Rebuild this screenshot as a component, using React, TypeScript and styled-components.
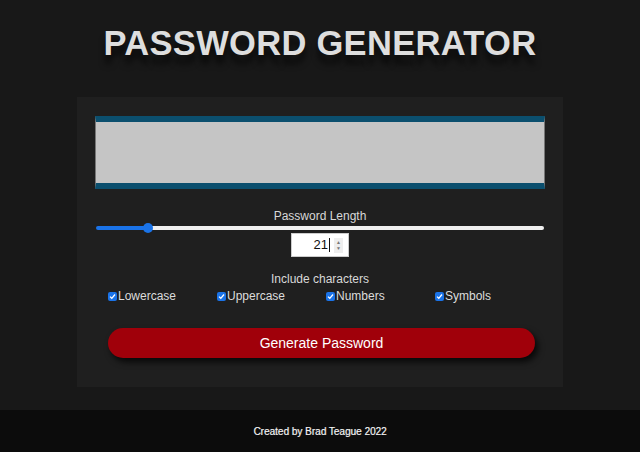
import React, { useState } from "react";
import styled, { createGlobalStyle } from "styled-components";

const Global = createGlobalStyle`
  html, body { margin: 0; padding: 0; background: #181818; }
  body { font-family: "Liberation Sans", Arial, Helvetica, sans-serif; color: #ddd; }
  * { box-sizing: border-box; }
`;

const Page = styled.div`
  min-height: 452px;
  display: flex;
  flex-direction: column;
  background: #181818;
`;

const Main = styled.main`
  flex: 1;
  display: flex;
  flex-direction: column;
  align-items: center;
`;

const Title = styled.h1`
  margin: 23px 0 0;
  font-size: 34.5px;
  line-height: 40px;
  font-weight: 700;
  color: #dedede;
  letter-spacing: 0.3px;
  text-shadow: 0 9px 6px rgba(0, 0, 0, 0.6);
`;

const Card = styled.section`
  margin-top: 34px;
  width: 486px;
  height: 290px;
  background: #1f1f1f;
  padding: 19px 18px 0;
  display: flex;
  flex-direction: column;
  align-items: center;
`;

const Output = styled.div`
  width: 450px;
  height: 73px;
  background: #c5c5c5;
  border-top: 6px solid #0b4f6e;
  border-bottom: 6px solid #0b4f6e;
  border-left: 1px solid #777;
  border-right: 1px solid #777;
`;

const Label = styled.div<{ $mt: number }>`
  margin-top: ${(p) => p.$mt}px;
  font-size: 12px;
  line-height: 14px;
  color: #d8d8d8;
`;

const Range = styled.input`
  -webkit-appearance: none;
  appearance: none;
  width: 448px;
  height: 4px;
  margin: 3px 0 0;
  border-radius: 2px;
  outline: none;
  &::-webkit-slider-thumb {
    -webkit-appearance: none;
    width: 10px;
    height: 10px;
    border-radius: 50%;
    background: #1a73e8;
    border: none;
  }
`;

const NumBox = styled.div`
  margin-top: 3px;
  width: 58px;
  height: 24px;
  background: #fff;
  border: 1px solid #ccc;
  display: flex;
  align-items: center;
  justify-content: flex-end;
  padding-right: 5px;
  gap: 4px;
`;

const NumText = styled.span`
  font-size: 13px;
  color: #111;
  border-right: 1px solid #111;
  padding-right: 1px;
  line-height: 14px;
`;

const Spinner = styled.div`
  width: 9px;
  height: 15px;
  background: #eee;
  display: flex;
  flex-direction: column;
  align-items: center;
  justify-content: center;
  font-size: 5px;
  color: #777;
  line-height: 6px;
`;

const Checks = styled.div`
  margin-top: 3px;
  width: 448px;
  display: grid;
  grid-template-columns: repeat(4, 1fr);
  padding-left: 12px;
`;

const CheckLabel = styled.label`
  display: flex;
  align-items: center;
  font-size: 12px;
  color: #dcdcdc;
  line-height: 14px;
`;

const Box = styled.span`
  width: 9px;
  height: 9px;
  border-radius: 2px;
  background: #1a73e8;
  display: inline-flex;
  align-items: center;
  justify-content: center;
  margin-right: 1px;
`;

const Button = styled.button`
  margin-top: 25px;
  margin-left: 3px;
  width: 427px;
  height: 30px;
  border: none;
  border-radius: 15px;
  background: #a0000a;
  color: #fff;
  font-family: "Liberation Sans", Arial, sans-serif;
  font-size: 14px;
  box-shadow: 3px 4px 6px rgba(0, 0, 0, 0.75);
`;

const Footer = styled.footer`
  height: 42px;
  background: #0c0c0c;
  display: flex;
  align-items: center;
  justify-content: center;
  font-size: 10px;
  color: #f0f0f0;
  text-shadow: 0.5px 0 0 rgba(255, 255, 255, 0.5);
`;

function Check({ label }: { label: string }) {
  return (
    <CheckLabel>
      <Box>
        <svg width="7" height="7" viewBox="0 0 7 7">
          <path d="M1 3.6 L2.8 5.3 L6 1.5" stroke="#fff" strokeWidth="1.3" fill="none" />
        </svg>
      </Box>
      {label}
    </CheckLabel>
  );
}

export default function App() {
  const [len, setLen] = useState(21);
  const pct = ((len - 8) / (128 - 8)) * 100;
  return (
    <Page>
      <Global />
      <Main>
        <Title>PASSWORD GENERATOR</Title>
        <Card>
          <Output />
          <Label $mt={20}>Password Length</Label>
          <Range
            type="range"
            min={8}
            max={128}
            value={len}
            onChange={(e) => setLen(Number(e.target.value))}
            style={{
              background: `linear-gradient(to right, #1a73e8 0%, #1a73e8 ${pct}%, #efefef ${pct}%, #efefef 100%)`,
            }}
          />
          <NumBox>
            <NumText>{len}</NumText>
            <Spinner>
              <span>▲</span>
              <span>▼</span>
            </Spinner>
          </NumBox>
          <Label $mt={15}>Include characters</Label>
          <Checks>
            <Check label="Lowercase" />
            <Check label="Uppercase" />
            <Check label="Numbers" />
            <Check label="Symbols" />
          </Checks>
          <Button>Generate Password</Button>
        </Card>
      </Main>
      <Footer>Created by Brad Teague 2022</Footer>
    </Page>
  );
}
